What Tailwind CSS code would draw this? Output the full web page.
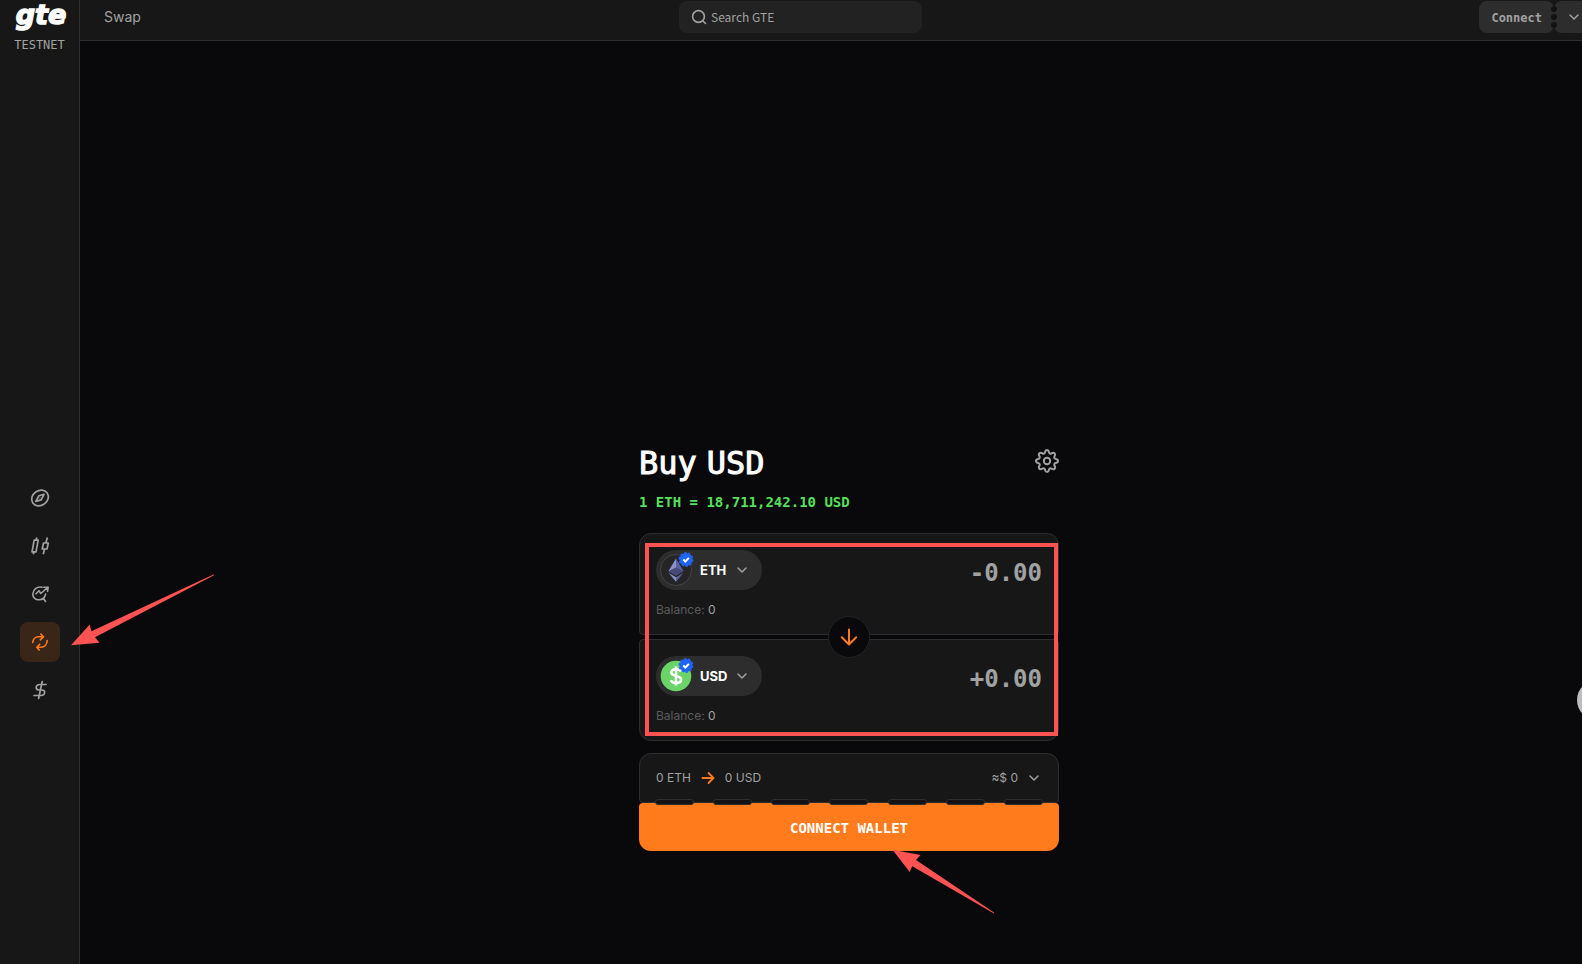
<!DOCTYPE html>
<html lang="en">
<head>
<meta charset="utf-8">
<title>Swap</title>
<script src="https://cdn.jsdelivr.net/npm/@tailwindcss/browser@4"></script>
</head>
<body class="relative flex min-h-screen overflow-x-hidden bg-[#09090b] font-[Inter,sans-serif] text-[#a1a1a1]">

<aside class="flex w-20 shrink-0 flex-col items-center justify-between border-r border-[#2e2e2e] bg-[#171717] pb-[254px]">
  <a href="#" class="flex flex-col items-center">
    <svg class="mt-1 h-7 w-16 overflow-visible" viewBox="0 0 64 28" role="img" aria-label="gte">
      <text x="33" y="20" text-anchor="middle" font-family="DejaVu Sans, sans-serif" font-size="27" font-weight="700" font-style="italic" fill="#fff" stroke="#fff" stroke-width="1.5">gte</text>
    </svg>
    <span class="font-['DejaVu_Sans_Mono',monospace] text-xs leading-[26px]">TESTNET</span>
  </a>
  <nav class="flex flex-col gap-2">
    <a href="#" aria-label="Explore" class="grid size-10 place-items-center rounded-lg">
      <svg class="size-5" viewBox="0 0 20 20" fill="none" stroke="currentColor" stroke-width="1.7" stroke-linejoin="round"><ellipse cx="10" cy="10" rx="8.800" ry="7.400" transform="rotate(-35 10 10)"/><path d="M14 6.300l-5.200 1.500-3 5.600 5.400-1.500z"/><path d="M9.600 10h.8"/></svg>
    </a>
    <a href="#" aria-label="Markets" class="grid size-10 place-items-center rounded-lg">
      <svg class="size-5" viewBox="0 0 20 20" fill="none" stroke="currentColor" stroke-width="1.7" stroke-linejoin="round"><path d="M4.200 4.200h4L6 15.800H2zM6.800 1.500l-.7 2.700M4 15.800l-.7 2.500M13.500 7h4.800L17 13h-4.800zM17.300 1.500L15.900 7M14.600 13l-1.400 5.300"/></svg>
    </a>
    <a href="#" aria-label="Research" class="grid size-10 place-items-center rounded-lg">
      <svg class="size-5" viewBox="0 0 20 20" fill="none" stroke="currentColor" stroke-width="1.6" stroke-linecap="round" stroke-linejoin="round"><path d="M12 3.200C7.500 2 3 5.500 2.800 10c-.1 3.800 2.800 6 6.200 5.800 3.600-.2 6-2.500 6.600-5.800M13.300 14l2.200 3.500M6 9.800l3-3 1.800 2.700L18 3.200M13.800 3.200h4.400l-.7 4.300"/></svg>
    </a>
    <a href="#" aria-label="Swap" aria-current="page" class="grid size-10 place-items-center rounded-lg bg-[#3a2619] text-[#ff7b1c]">
      <svg class="size-5" viewBox="0 0 20 20" fill="none" stroke="currentColor" stroke-width="1.6" stroke-linecap="round" stroke-linejoin="round"><path d="M2.800 10.500C3 7 5.500 4.800 8.500 4.800H13M10.800 2l2.700 2.800-3.200 3M17.200 8.500C17 12.500 14.500 15.200 11 15.200H7M9.800 12.200l-3 3 2.400 2.800"/></svg>
    </a>
    <a href="#" aria-label="Earn" class="grid size-10 place-items-center rounded-lg">
      <svg class="size-5" viewBox="0 0 20 20" fill="none" stroke="currentColor" stroke-width="1.700" stroke-linecap="round" stroke-linejoin="round"><path d="M16 4.500H10C7.500 4.500 6 6 6.200 7.800 6.400 9.300 7.500 10 9.500 10h2.200c2 0 3 1 2.900 2.500-.1 1.800-1.800 3-3.900 3H4M12.200 1.500L8.600 18.500"/></svg>
    </a>
  </nav>
</aside>

<div class="flex min-w-0 flex-1 flex-col">
  <header class="grid grid-cols-[1fr_243px_1fr] items-start border-b border-[#2e2e2e] bg-[#171717] pt-px pr-[61px] pb-[7px]">
    <span class="pl-6 text-sm leading-8">Swap</span>
    <label class="flex h-8 items-center gap-1 rounded-lg bg-[#222222] pl-3">
      <svg class="size-4 shrink-0" viewBox="0 0 16 16" fill="none" stroke="currentColor" stroke-width="1.600" stroke-linecap="round"><circle cx="7.500" cy="7.500" r="5.900"/><path d="M11.800 11.800L14.500 14.500"/></svg>
      <input type="text" placeholder="Search GTE" aria-label="Search GTE" class="min-w-0 flex-1 bg-transparent font-['Noto_Sans_CJK_SC',sans-serif] text-xs outline-none placeholder:text-[#a1a1a1]">
    </label>
    <div class="relative -mr-[61px] flex h-8 justify-end overflow-hidden">
      <button class="h-8 rounded-lg bg-[#2d2d2d] px-3 pt-0.5 font-['DejaVu_Sans_Mono',monospace] text-xs font-bold">Connect</button>
      <button aria-label="More" class="h-8 w-7 rounded-l-lg bg-[#2d2d2d] pl-3">
        <svg class="h-4 w-4" viewBox="0 0 16 16" fill="none" stroke="currentColor" stroke-width="1.500" stroke-linecap="round" stroke-linejoin="round"><path d="M4 6l4 4 4-4"/></svg>
      </button>
      <span class="absolute top-[5px] right-[25px] flex flex-col gap-[2px]"><i class="size-1.5 rounded-full bg-[#131313]"></i><i class="size-1.5 rounded-full bg-[#131313]"></i><i class="size-1.5 rounded-full bg-[#131313]"></i></span>
    </div>
  </header>

  <main class="flex flex-1 flex-col items-center justify-end pb-[113px] pl-9">
    <section class="w-full max-w-[420px]">
      <div class="flex items-start justify-between">
        <h1 class="flex gap-2.5 font-['DejaVu_Sans_Mono',monospace] text-[32px] leading-10 text-white [-webkit-text-stroke:1px]"><span>Buy</span> <span>USD</span></h1>
        <button aria-label="Settings" class="mt-1.5">
          <svg class="size-6" viewBox="0 0 24 24" fill="none" stroke="currentColor" stroke-width="2" stroke-linejoin="round"><circle cx="12" cy="12" r="3.200"/><path d="M12 1c1.700 0 1.700 1 2 2.400.3 1.300 1.400 1.700 2.500 1 1.200-.8 2-1.300 3.100-.1s.6 2-.1 3.100c-.7 1.100-.2 2.200 1.100 2.500 1.400.3 2.400.4 2.400 2.100s-1 1.800-2.400 2.100c-1.300.3-1.800 1.400-1.100 2.500.7 1.100 1.200 2 .1 3.100s-2 .6-3.100-.1c-1.100-.7-2.200-.2-2.500 1C13.700 22 13.700 23 12 23s-1.700-1-2-2.400c-.3-1.200-1.400-1.700-2.500-1-1.100.7-2 1.200-3.100.1s-.6-2 .1-3.100c.7-1.100.2-2.200-1.100-2.500C2 13.800 1 13.700 1 12s1-1.800 2.400-2.100c1.300-.3 1.800-1.400 1.100-2.500-.7-1.100-1.200-2-.1-3.100s2-.6 3.100.1c1.100.7 2.200.3 2.500-1C10.300 2 10.300 1 12 1z"/></svg>
        </button>
      </div>
      <p class="mt-[7px] mb-[19px] font-['DejaVu_Sans_Mono',monospace] text-sm leading-6 font-bold text-[#54e05a]">1 ETH = 18,711,242.10 USD</p>

      <div class="relative flex flex-col gap-1">
        <div class="flex justify-between rounded-t-xl rounded-b-[4px] border border-[#2e2e2e] bg-[#171717] px-4 pt-4 pb-[15px]">
          <div>
            <button class="flex h-10 w-[106px] items-center gap-2 rounded-full bg-[#2d2d2d] pl-1">
              <svg class="-mr-1 h-9 w-9 shrink-0" viewBox="0 0 36 36"><circle cx="16" cy="18" r="15.500" fill="#252527" stroke="#444"/><path d="M16 6.500L8.500 19l7.500 4.500z" fill="#8a92c9"/><path d="M16 6.500L23.500 19 16 23.500z" fill="#5b639f"/><path d="M8.500 19l7.500-3.500 7.500 3.500-7.500 4.500z" fill="#454a78"/><path d="M8.500 20.800l7.500 9v-4.500z" fill="#8a92c9"/><path d="M23.500 20.800l-7.500 9v-4.500z" fill="#5b639f"/><circle cx="26" cy="7.500" r="6.500" fill="#1f64f4"/><circle cx="26" cy="7.500" r="6.700" fill="none" stroke="#1f64f4" stroke-width="1.400" stroke-dasharray="2.600 1.600"/><path d="M23.300 7.500l2 2 3.600-3.600" fill="none" stroke="#fff" stroke-width="2"/></svg>
              <span class="w-[26px] pt-0.5 text-[13px] font-bold text-white">ETH</span>
              <svg class="h-4 w-4" viewBox="0 0 16 16" fill="none" stroke="currentColor" stroke-width="1.500" stroke-linecap="round" stroke-linejoin="round"><path d="M4 6l4 4 4-4"/></svg>
            </button>
            <p class="mt-[11px] text-xs leading-[18px] text-[#5c5c5c]">Balance: <span class="text-[#a1a1a1]">0</span></p>
          </div>
          <input type="text" value="-0.00" aria-label="Amount sold" class="h-[46px] w-40 bg-transparent text-right font-['DejaVu_Sans_Mono',monospace] text-2xl font-bold outline-none">
        </div>
        <div class="flex justify-between rounded-t-[4px] rounded-b-xl border border-[#2e2e2e] bg-[#171717] px-4 pt-4 pb-[15px]">
          <div>
            <button class="flex h-10 w-[106px] items-center gap-2 rounded-full bg-[#2d2d2d] pl-1">
              <svg class="-mr-1 h-9 w-9 shrink-0" viewBox="0 0 36 36"><circle cx="16" cy="18" r="15.300" fill="#6bd468"/><path d="M21 13.500c-1-1.600-2.700-2.300-5-2.300-2.800 0-4.700 1.200-4.700 3.300 0 4.600 9.800 2.200 9.800 7 0 2.200-2 3.500-5 3.500-2.600 0-4.500-1-5.300-2.800M16 8.500v19" fill="none" stroke="#fff" stroke-width="2.600"/><circle cx="26" cy="7.500" r="6.500" fill="#1f64f4"/><circle cx="26" cy="7.500" r="6.700" fill="none" stroke="#1f64f4" stroke-width="1.400" stroke-dasharray="2.600 1.600"/><path d="M23.300 7.500l2 2 3.600-3.600" fill="none" stroke="#fff" stroke-width="2"/></svg>
              <span class="w-[26px] pt-0.5 text-[13px] font-bold text-white">USD</span>
              <svg class="h-4 w-4" viewBox="0 0 16 16" fill="none" stroke="currentColor" stroke-width="1.500" stroke-linecap="round" stroke-linejoin="round"><path d="M4 6l4 4 4-4"/></svg>
            </button>
            <p class="mt-[11px] text-xs leading-[18px] text-[#5c5c5c]">Balance: <span class="text-[#a1a1a1]">0</span></p>
          </div>
          <input type="text" value="+0.00" aria-label="Amount bought" class="h-[46px] w-40 bg-transparent text-right font-['DejaVu_Sans_Mono',monospace] text-2xl font-bold outline-none">
        </div>
        <button aria-label="Switch tokens" class="absolute top-1/2 left-1/2 grid size-[42px] -translate-1/2 place-items-center rounded-full border border-[#232325] bg-[#09090b] text-[#ff7b1c]">
          <svg class="size-5" viewBox="0 0 20 20" fill="none" stroke="currentColor" stroke-width="2" stroke-linecap="round" stroke-linejoin="round"><path d="M10 2.500v15M2.800 10.300L10 17.500l7.200-7.200"/></svg>
        </button>
        <div class="pointer-events-none absolute top-2.5 right-px bottom-[5px] left-1.5 border-4 border-[#ff5252]"></div>
      </div>

      <div class="relative mt-3">
        <div class="flex h-[50px] items-center justify-between rounded-t-xl rounded-b-[4px] border border-[#2e2e2e] bg-[#171717] px-4 text-xs">
          <span class="flex items-center gap-[9px]">0 ETH
            <svg class="size-4 text-[#ff7b1c]" viewBox="0 0 16 16" fill="none" stroke="currentColor" stroke-width="1.800" stroke-linecap="round" stroke-linejoin="round"><path d="M2.500 8h11M8.500 3l5 5-5 5"/></svg>
            0 USD</span>
          <button class="flex items-center gap-2">≈$ 0
            <svg class="h-4 w-4" viewBox="0 0 16 16" fill="none" stroke="currentColor" stroke-width="1.500" stroke-linecap="round" stroke-linejoin="round"><path d="M4 6l4 4 4-4"/></svg>
          </button>
        </div>
        <div class="absolute inset-x-4 -bottom-[2px] z-10 flex justify-between">
          <i class="h-1.5 w-[39px] rounded-[3px] border border-[#2e2e2e] bg-[#131315]"></i><i class="h-1.5 w-[39px] rounded-[3px] border border-[#2e2e2e] bg-[#131315]"></i><i class="h-1.5 w-[39px] rounded-[3px] border border-[#2e2e2e] bg-[#131315]"></i><i class="h-1.5 w-[39px] rounded-[3px] border border-[#2e2e2e] bg-[#131315]"></i><i class="h-1.5 w-[39px] rounded-[3px] border border-[#2e2e2e] bg-[#131315]"></i><i class="h-1.5 w-[39px] rounded-[3px] border border-[#2e2e2e] bg-[#131315]"></i><i class="h-1.5 w-[39px] rounded-[3px] border border-[#2e2e2e] bg-[#131315]"></i>
        </div>
      </div>
      <button class="h-12 w-full rounded-t-[4px] rounded-b-xl bg-[#ff7b1c] pt-0.5 font-['DejaVu_Sans_Mono',monospace] text-sm font-bold text-white">CONNECT WALLET</button>
    </section>
  </main>
</div>

<svg class="pointer-events-none absolute top-[574px] left-[71px] h-[72px] w-[144px]" viewBox="71 574 144 72" fill="#ff5252"><path d="M71 645.300L89.700 624.500l1.700 6.800L214 574.300v1L95 637.300l4.500 5.400z"/></svg>
<svg class="pointer-events-none absolute top-[849px] left-[892px] h-[66px] w-[104px]" viewBox="892 849 104 66" fill="#ff5252"><path d="M892.500 849.700L920.500 855l-4.500 5 78 52.500v1l-81.700-47.200-2.600 5.700z"/></svg>
<span class="absolute top-[680px] -right-[35px] size-10 rounded-full bg-[#bdbdbd]"></span>
</body>
</html>
